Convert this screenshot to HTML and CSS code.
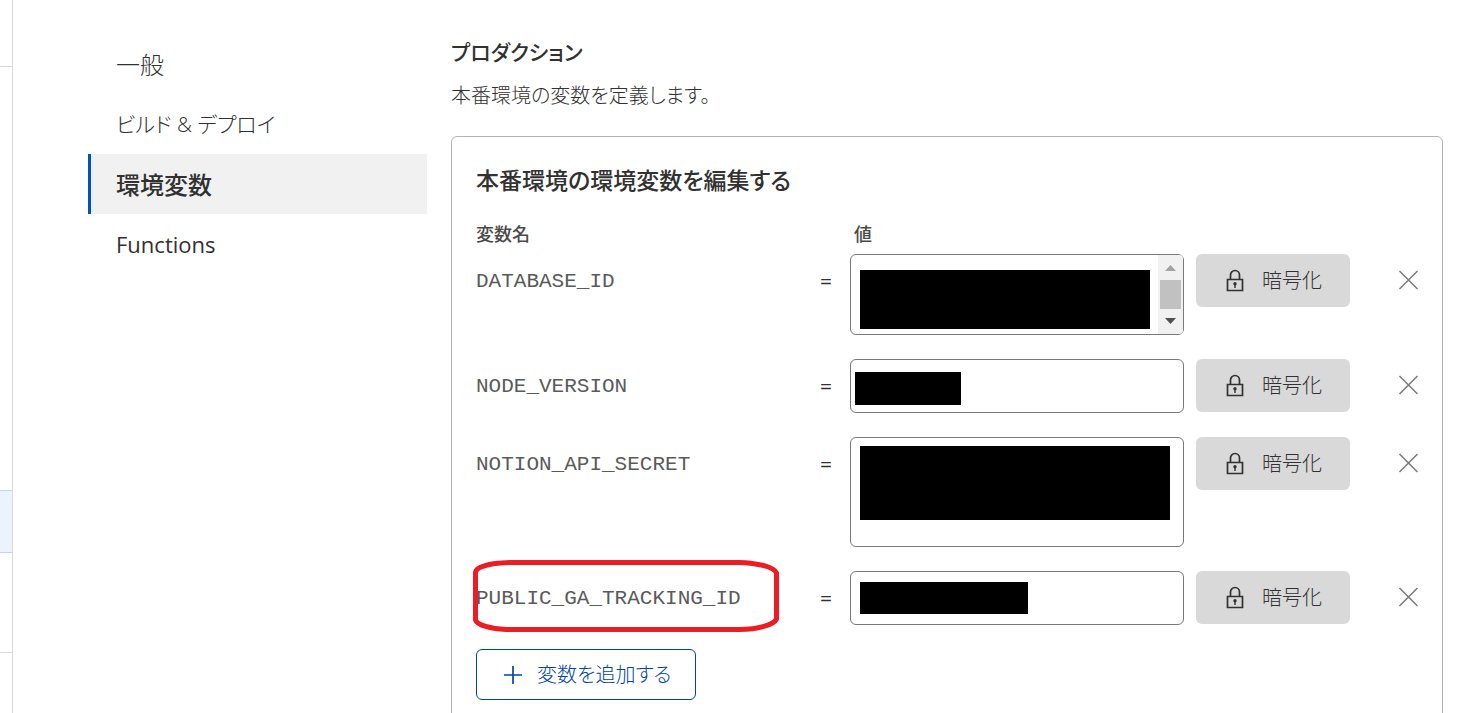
FILE: index.html
```html
<!DOCTYPE html>
<html lang="ja">
<head>
<meta charset="utf-8">
<meta name="viewport" content="width=device-width, initial-scale=1">
<title>環境変数</title>
<link rel="stylesheet" href="styles.css">
</head>
<body>
<svg class="sprite" aria-hidden="true">
  <symbol id="lock" viewBox="0 0 18 24">
    <path d="M1.500 10.500h15v11h-15zM4.500 10.500V6a4.500 4.500 0 0 1 9 0v4.500" fill="none" stroke="currentColor" stroke-width="1.700"/>
    <circle cx="9" cy="14.700" r="1.700" fill="currentColor"/>
    <path d="M9 15v4" stroke="currentColor" stroke-width="1.400"/>
  </symbol>
  <symbol id="cross" viewBox="0 0 20 20">
    <path d="M1.500 1l18 18M19.500 1L1.500 19" fill="none" stroke="currentColor" stroke-width="1.500"/>
  </symbol>
</svg>
<div class="app">
  <aside class="rail">
    <div class="rail-block rail-top"></div>
    <div class="rail-block rail-gap"></div>
    <div class="rail-block rail-current"></div>
    <div class="rail-block rail-low"></div>
  </aside>
  <nav class="nav">
    <a class="nav-link" href="#general">一般</a>
    <a class="nav-link nav-link-kana" href="#build">ビルド &amp; デプロイ</a>
    <a class="nav-link nav-link-current" href="#env" aria-current="page">環境変数</a>
    <a class="nav-link nav-link-latin" href="#functions">Functions</a>
  </nav>
  <main class="main">
    <h1 class="title">プロダクション</h1>
    <p class="lead">本番環境の変数を定義します。</p>
    <section class="card">
      <h2 class="card-title">本番環境の環境変数を編集する</h2>
      <div class="row head">
        <span class="head-name">変数名</span>
        <span class="head-value">値</span>
      </div>
      <div class="rows">
        <div class="row">
          <label class="name" for="v1">DATABASE_ID</label>
          <span class="eq">=</span>
          <div class="field">
            <textarea class="input input-medium" id="v1"></textarea>
            <span class="mask mask-database"></span>
            <svg class="scroller" viewBox="0 0 25 79" aria-hidden="true">
              <path d="M0 0h25v79H0z" fill="#f1f1f1"/>
              <path d="M2 25h21v29H2z" fill="#c1c1c1"/>
              <path d="M7 16l5.500-6 5.500 6z" fill="#a3a3a3"/>
              <path d="M7 63l5.500 6 5.500-6z" fill="#505050"/>
            </svg>
          </div>
          <button class="encrypt" type="button"><svg class="lock"><use href="#lock"/></svg>暗号化</button>
          <button class="remove" type="button" aria-label="削除"><svg class="cross"><use href="#cross"/></svg></button>
        </div>
        <div class="row">
          <label class="name" for="v2">NODE_VERSION</label>
          <span class="eq">=</span>
          <div class="field">
            <input class="input" id="v2" type="text">
            <span class="mask mask-version"></span>
          </div>
          <button class="encrypt" type="button"><svg class="lock"><use href="#lock"/></svg>暗号化</button>
          <button class="remove" type="button" aria-label="削除"><svg class="cross"><use href="#cross"/></svg></button>
        </div>
        <div class="row">
          <label class="name" for="v3">NOTION_API_SECRET</label>
          <span class="eq">=</span>
          <div class="field">
            <textarea class="input input-tall" id="v3"></textarea>
            <span class="mask mask-secret"></span>
          </div>
          <button class="encrypt" type="button"><svg class="lock"><use href="#lock"/></svg>暗号化</button>
          <button class="remove" type="button" aria-label="削除"><svg class="cross"><use href="#cross"/></svg></button>
        </div>
        <div class="row">
          <div class="marked">
            <label class="name" for="v4">PUBLIC_GA_TRACKING_ID</label>
            <svg class="marker" viewBox="0 0 306 72" aria-hidden="true">
              <path d="M2.500 60V12C4 6 20 3 38 2.500H266C285 3 301 7 303.500 13V59C301 65 285 69 266 69.500H33C18 69 4 65 2.500 60Z" fill="none" stroke="#ed1c24" stroke-width="5"/>
            </svg>
          </div>
          <span class="eq">=</span>
          <div class="field">
            <input class="input" id="v4" type="text">
            <span class="mask mask-tracking"></span>
          </div>
          <button class="encrypt" type="button"><svg class="lock"><use href="#lock"/></svg>暗号化</button>
          <button class="remove" type="button" aria-label="削除"><svg class="cross"><use href="#cross"/></svg></button>
        </div>
      </div>
      <button class="add" type="button"><svg class="plus" viewBox="0 0 20 20" aria-hidden="true"><path d="M10 1v18M1 10h18" stroke="currentColor" stroke-width="1.700"/></svg>変数を追加する</button>
    </section>
  </main>
</div>
</body>
</html>
```

FILE: styles.css
```css
* {
  box-sizing: border-box;
}

body {
  margin: 0;
  background: #fff;
  color: #313131;
  font-family: "Open Sans", "Noto Sans CJK JP", sans-serif;
  font-feature-settings: "palt";
}

button,
input,
textarea {
  font: inherit;
  font-feature-settings: inherit;
  color: inherit;
}

.sprite {
  display: none;
}

.app {
  display: flex;
  height: 100vh;
  overflow: hidden;
}

.rail {
  flex: none;
  width: 13px;
  border-right: 1px solid #d9d9d9;
}

.rail-block {
  border-bottom: 1px solid #d9d9d9;
}

.rail-top {
  height: 67px;
}

.rail-gap {
  height: 424px;
  border-color: #b9d6ff;
}

.rail-current {
  height: 62px;
  background: #ebf3ff;
  border-color: #b9d6ff;
}

.rail-low {
  height: 100px;
}

.nav {
  flex: none;
  width: 339px;
  margin: 34px 24px 0 75px;
}

.nav-link {
  display: flex;
  align-items: center;
  height: 60px;
  padding: 0 0 2px 25px;
  border-left: 3px solid transparent;
  color: #313131;
  font-size: 24px;
  font-weight: 300;
  text-decoration: none;
  white-space: nowrap;
}

.nav-link-current {
  background: #f1f1f1;
  border-color: #0051c3;
  font-weight: 500;
}

.nav-link-kana {
  font-size: 21px;
}

.nav-link-latin {
  padding-bottom: 0;
  font-size: 22px;
  font-weight: 400;
}

.main {
  flex: 1;
  min-width: 0;
  padding: 36px 34px 24px 0;
}

.title {
  margin: 0 0 12px;
  font-size: 21px;
  font-weight: 500;
  line-height: 32px;
}

.lead {
  margin: 0 0 24px;
  font-size: 20px;
  font-weight: 300;
  line-height: 32px;
}

.card {
  padding: 24px;
  border: 1px solid #b3b3b3;
  border-radius: 6px;
}

.card-title {
  margin: 0 0 23px;
  font-size: 23px;
  font-weight: 500;
  line-height: 38px;
}

.row {
  display: grid;
  grid-template-columns: 326fr 24px 334fr 154px 56px;
  column-gap: 12px;
  align-items: start;
}

.head {
  margin-bottom: 8px;
  color: #4a4a4a;
  font-size: 18px;
  font-weight: 500;
  line-height: 24px;
}

.head-value {
  grid-column: 3;
  padding-left: 4px;
}

.rows {
  display: grid;
  gap: 24px;
}

.name {
  display: block;
  padding-top: 2px;
  color: #5a5a5a;
  font-family: "Liberation Mono", monospace;
  font-size: 21px;
  line-height: 52px;
}

.marked {
  position: relative;
}

.marker {
  position: absolute;
  top: -11px;
  left: -3px;
  width: 306px;
  height: 72px;
}

.eq {
  font-size: 21px;
  line-height: 54px;
  text-align: center;
}

.field {
  position: relative;
  display: flex;
}

.input {
  width: 100%;
  height: 54px;
  padding: 8px;
  border: 1px solid #797979;
  border-radius: 6px;
  background: #fff;
  resize: none;
}

.input-medium {
  height: 81px;
}

.input-tall {
  height: 110px;
}

.mask {
  position: absolute;
  background: #000;
}

.mask-database {
  inset: 16px 34px 6px 10px;
}

.mask-version {
  top: 13px;
  left: 5px;
  width: 106px;
  height: 33px;
}

.mask-secret {
  inset: 9px 14px 27px 10px;
}

.mask-tracking {
  top: 11px;
  left: 10px;
  width: 168px;
  height: 32px;
}

.scroller {
  position: absolute;
  top: 1px;
  right: 1px;
  width: 25px;
  height: 79px;
  border-radius: 0 4px 4px 0;
}

.encrypt {
  display: flex;
  align-items: center;
  justify-content: center;
  gap: 18px;
  height: 53px;
  padding: 0 0 0 2px;
  border: 0;
  border-radius: 6px;
  background: #d9d9d9;
  font-size: 20px;
  font-weight: 300;
  line-height: 28px;
}

.lock {
  width: 18px;
  height: 24px;
}

.remove {
  display: flex;
  align-items: center;
  justify-content: flex-end;
  height: 52px;
  padding: 0;
  border: 0;
  background: none;
  color: #797979;
}

.cross {
  width: 20px;
  height: 20px;
}

.add {
  display: flex;
  align-items: center;
  gap: 14px;
  height: 51px;
  margin-top: 24px;
  padding: 0 24px 0 26px;
  border: 1px solid #0045a6;
  border-radius: 6px;
  background: #fff;
  color: #0045a6;
  font-size: 20px;
  font-weight: 300;
  line-height: 28px;
}

.plus {
  width: 20px;
  height: 20px;
}
```
